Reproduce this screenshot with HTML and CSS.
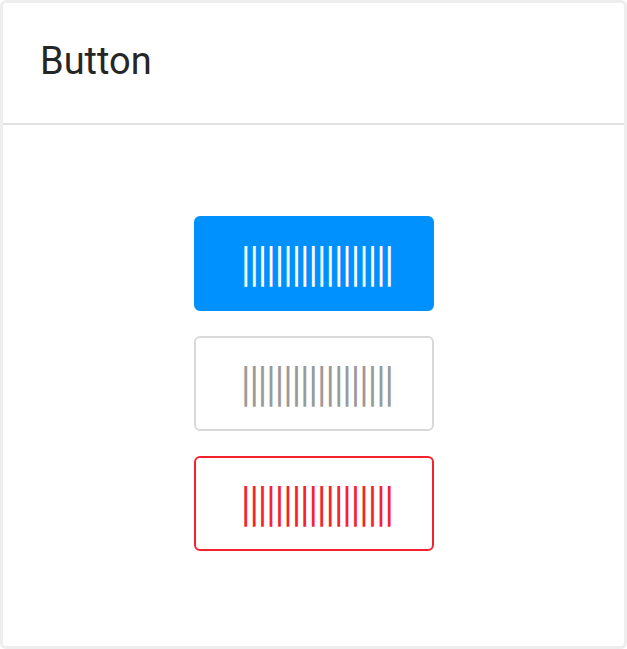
FILE: index.html
```html
<!DOCTYPE html>
<html>
<head>
<meta charset="utf-8">
<link rel="stylesheet" href="styles.css">
</head>
<body>
<div class="card">
  <div class="card-header"><span class="title">Button</span></div>
  <div class="card-body">
    <button class="btn btn-primary"><span class="label">||||||||||||||||||</span></button>
    <button class="btn btn-default"><span class="label">||||||||||||||||||</span></button>
    <button class="btn btn-danger"><span class="label">||||||||||||||||||</span></button>
  </div>
</div>
</body>
</html>
```
FILE: styles.css
```css
html, body {
  margin: 0;
  padding: 0;
  background: #fff;
}
.card {
  box-sizing: border-box;
  width: 627px;
  height: 649px;
  border: 3px solid #eeeeee;
  border-radius: 6px;
  background: #fff;
  font-family: Roboto, "Noto Sans", sans-serif;
}
.card-header {
  box-sizing: border-box;
  height: 122px;
  border-bottom: 2px solid #e0e0e0;
  padding-left: 37px;
  display: flex;
  align-items: center;
}
.title {
  font-size: 38px;
  color: #262626;
  line-height: 1;
  margin-top: -4px;
}
.card-body {
  display: flex;
  flex-direction: column;
  align-items: center;
  padding-top: 91px;
  gap: 25px;
}
.btn {
  box-sizing: border-box;
  width: 240px;
  height: 95px;
  border-radius: 6px;
  border: 2px solid transparent;
  background: #fff;
  padding: 0;
  display: flex;
  align-items: center;
  justify-content: center;
  font-family: Roboto, sans-serif;
}
.label {
  display: inline-block;
  font-size: 34px;
  font-weight: 500;
  line-height: 1;
  letter-spacing: 0px;
  margin-left: 8px;
  margin-top: -2px;
  transform: scaleY(1.4);
}
.btn-primary {
  background: #0091ff;
  border-color: #0091ff;
  color: #fff;
}
.btn-default {
  border-color: #d9d9d9;
  color: #999999;
}
.btn-danger {
  border-color: #f5222d;
  color: #f5222d;
}
```
